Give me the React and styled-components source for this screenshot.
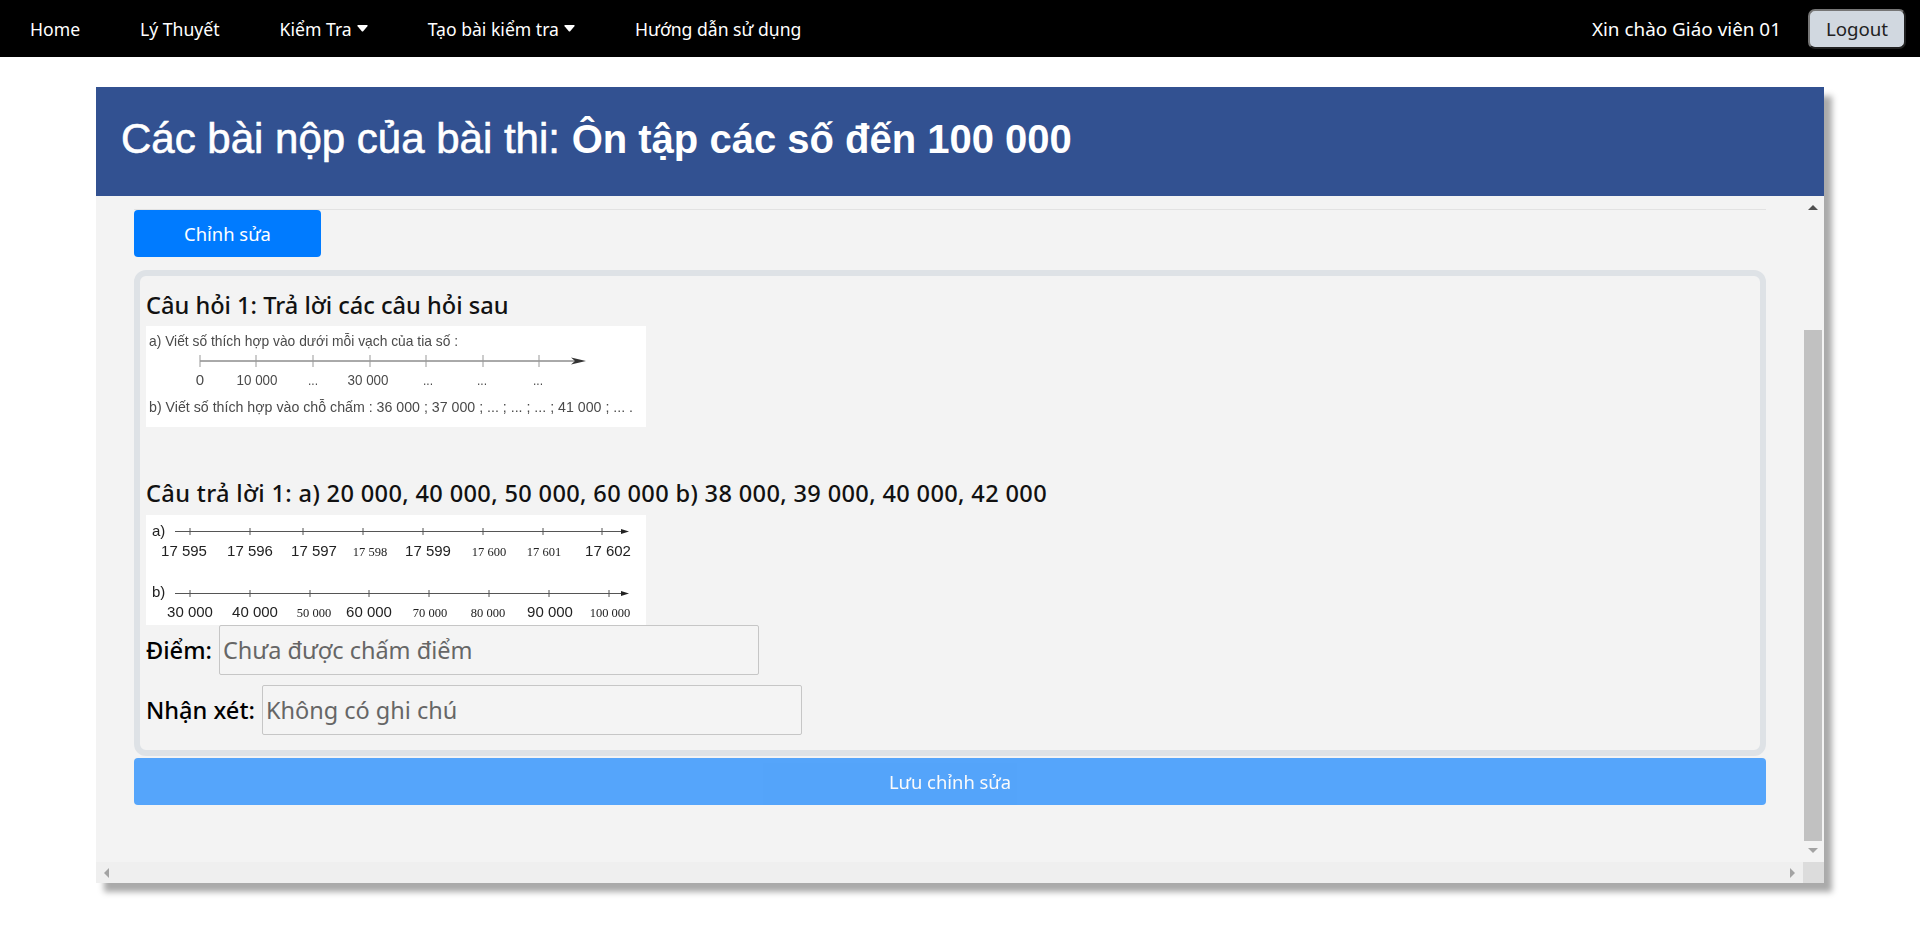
import React from 'react'
import styled, { createGlobalStyle } from 'styled-components'

const GlobalStyle = createGlobalStyle`
  html, body {
    margin: 0;
    height: 100%;
    background: #fff;
    overflow: hidden;
  }
  body {
    font-family: "Noto Sans", "Open Sans", sans-serif;
    color: #111;
  }
`

const Page = styled.div`
  display: flex;
  flex-direction: column;
  height: 930px;
`

const NavBar = styled.nav`
  display: flex;
  align-items: center;
  justify-content: space-between;
  height: 57px;
  background: #000;
  color: #fff;
  padding: 0 14px 0 30px;
`

const NavLinks = styled.div`
  display: flex;
  gap: 60px;
`

const NavLink = styled.a`
  display: flex;
  align-items: center;
  gap: 5px;
  font-size: 17.6px;
  color: #fff;
`

const UserBox = styled.div`
  display: flex;
  align-items: center;
  gap: 27px;
  font-size: 18.9px;
`

const LogoutButton = styled.button`
  width: 98px;
  height: 40px;
  padding: 0;
  background: #d1d8e0;
  border: 2px outset #767676;
  border-radius: 7px;
  font: inherit;
  font-size: 18.7px;
  color: #222;
`

const Main = styled.main`
  padding: 30px 96px 0;
`

const Card = styled.section`
  display: flex;
  flex-direction: column;
  height: 796px;
  background: #f3f3f3;
  box-shadow: 8px 9px 6px #aaa;
`

const CardHeader = styled.header`
  display: flex;
  align-items: center;
  box-sizing: border-box;
  height: 109px;
  padding: 0 25px 6px;
  background: #325191;
  color: #fff;
`

const Title = styled.h1`
  margin: 0;
  font-family: "Liberation Sans", Arial, sans-serif;
  font-size: 42px;
  font-weight: 400;
  -webkit-text-stroke: 0.6px #fff;
`

const TitleName = styled.span`
  font-size: 40px;
  font-weight: 700;
  -webkit-text-stroke: 0;
`

const ScrollArea = styled.div`
  flex: 1;
  min-height: 0;
  display: grid;
  grid-template-columns: 1fr 21px;
  grid-template-rows: 1fr 21px;
`

const Viewport = styled.div`
  overflow: hidden;
  padding: 13px 37px 0 38px;
`

const Divider = styled.hr`
  margin: 0;
  border: 0;
  border-top: 1px solid #e2e2e2;
`

const PrimaryButton = styled.button`
  display: block;
  width: ${p => (p.$wide ? '100%' : '187px')};
  height: 47px;
  padding: 0;
  border: 0;
  border-radius: 4px;
  background: #007bff;
  opacity: ${p => (p.$wide ? 0.65 : 1)};
  color: #fff;
  font: inherit;
  font-size: 18.4px;
`

const QuestionBox = styled.div`
  display: flex;
  flex-direction: column;
  align-items: flex-start;
  margin-top: 13px;
  height: 486px;
  box-sizing: border-box;
  margin-bottom: 2px;
  padding: 10px 6px 0;
  border: 6px solid #dee2e6;
  border-radius: 12px;
`

const Heading = styled.h5`
  margin: 0;
  height: 40px;
  font-size: 23.6px;
  line-height: 38px;
  font-weight: 500;
  white-space: nowrap;
`

const AnswerHeading = styled(Heading)`
  height: 41px;
  margin-top: 47px;
  letter-spacing: 0.34px;
`

const Figure = styled.svg`
  display: block;
  background: #fff;
  font-family: "Liberation Sans", Arial, sans-serif;
  fill: #4a4a4a;
  filter: blur(0.3px);
`

const FieldRow = styled.label`
  display: flex;
  align-items: center;
  gap: 7px;
  margin-bottom: 10px;
  font-size: 23.6px;
  font-weight: 500;
  color: #000;
`

const FieldInput = styled.input`
  box-sizing: border-box;
  width: 540px;
  height: 50px;
  padding: 0 3px;
  background: #f4f4f4;
  border: 1px solid #c6c6c6;
  border-radius: 2px;
  font: inherit;
  font-size: 23.5px;
  font-weight: 400;
  &::placeholder {
    color: #666;
    opacity: 1;
  }
`

const VerticalBar = styled.div`
  position: relative;
  background: #f3f3f3;
`

const VerticalThumb = styled.div`
  margin: 134px 2px 0 1px;
  height: 511px;
  background: #c1c1c1;
`

const Arrow = styled.svg`
  position: absolute;
  display: block;
  fill: ${p => p.$color || '#a3a3a3'};
`

const HorizontalBar = styled.div`
  position: relative;
  background: #efefef;
`

const Corner = styled.div`
  background: #dcdcdc;
`

const Line = ({ y, ticks, x1, x2, tickTop, tickBottom, stroke = '#555', tickStroke = '#555' }) => (
  <g strokeWidth="1">
    <line x1={x1} x2={x2} y1={y} y2={y} stroke={stroke} />
    {ticks.map(t => <line key={t} x1={t} x2={t} y1={tickTop} y2={tickBottom} stroke={tickStroke} />)}
  </g>
)

const Labels = ({ y, items }) => items.map(([t, x, serif]) => (
  <text
    key={t + x}
    x={x}
    y={y}
    textAnchor="middle"
    fontSize={serif ? 12.5 : 15}
    fontFamily={serif ? '"Liberation Serif", serif' : undefined}
    fill="#222"
  >
    {t}
  </text>
))

const QuestionFigure = () => (
  <Figure width="500" height="101" viewBox="0 0 500 101">
    <text x="3" y="20" fontSize="15" textLength="309" lengthAdjust="spacingAndGlyphs">a) Viết số thích hợp vào dưới mỗi vạch của tia số :</text>
    <Line y={35} x1={54} x2={432} tickTop={29} tickBottom={41} stroke="#555" tickStroke="#999" ticks={[54, 110, 167, 224, 280, 337, 393]} />
    <path d="M425 31.5 L440 35 L425 38.5 L429 35 Z" fill="#333" />
    <text x="54" y="59" fontSize="15" textAnchor="middle">0</text>
    <text x="111" y="59" fontSize="15" textLength="41" lengthAdjust="spacingAndGlyphs" textAnchor="middle">10 000</text>
    <text x="167" y="59" fontSize="12" textAnchor="middle">...</text>
    <text x="222" y="59" fontSize="15" textLength="41" lengthAdjust="spacingAndGlyphs" textAnchor="middle">30 000</text>
    <text x="282" y="59" fontSize="12" textAnchor="middle">...</text>
    <text x="336" y="59" fontSize="12" textAnchor="middle">...</text>
    <text x="392" y="59" fontSize="12" textAnchor="middle">...</text>
    <text x="3" y="86" fontSize="15" textLength="484" lengthAdjust="spacingAndGlyphs">b) Viết số thích hợp vào chỗ chấm : 36 000 ;  37 000 ; ... ; ... ; ... ; 41 000 ; ... .</text>
  </Figure>
)

const AnswerFigure = () => (
  <Figure width="500" height="110" viewBox="0 0 500 110">
    <text x="6" y="21" fontSize="15" fill="#222">a)</text>
    <Line y={16.5} x1={29} x2={476} tickTop={13} tickBottom={20} ticks={[44, 104, 157, 217, 277, 337, 397, 456]} />
    <path d="M475 14 L483 16.5 L475 19 Z" fill="#222" />
    <Labels y={41} items={[['17 595', 38], ['17 596', 104], ['17 597', 168], ['17 598', 224, true], ['17 599', 282], ['17 600', 343, true], ['17 601', 398, true], ['17 602', 462]]} />
    <text x="6" y="82" fontSize="15" fill="#222">b)</text>
    <Line y={78.5} x1={29} x2={476} tickTop={75} tickBottom={82} ticks={[44, 104, 164, 223, 283, 343, 403, 463]} />
    <path d="M475 76 L483 78.5 L475 81 Z" fill="#222" />
    <Labels y={102} items={[['30 000', 44], ['40 000', 109], ['50 000', 168, true], ['60 000', 223], ['70 000', 284, true], ['80 000', 342, true], ['90 000', 404], ['100 000', 464, true]]} />
  </Figure>
)

const Caret = () => (
  <svg width="11" height="7" viewBox="0 0 11 7" fill="#fff">
    <path d="M1 0 H10 Q11.2 0 10.4 1.2 L6.2 6.2 Q5.5 7 4.8 6.2 L0.6 1.2 Q-0.2 0 1 0 Z" />
  </svg>
)

export default function App() {
  return (
    <Page>
      <GlobalStyle />
      <NavBar>
        <NavLinks>
          <NavLink>Home</NavLink>
          <NavLink>Lý Thuyết</NavLink>
          <NavLink>Kiểm Tra <Caret /></NavLink>
          <NavLink>Tạo bài kiểm tra <Caret /></NavLink>
          <NavLink>Hướng dẫn sử dụng</NavLink>
        </NavLinks>
        <UserBox>
          <span>Xin chào Giáo viên 01</span>
          <LogoutButton>Logout</LogoutButton>
        </UserBox>
      </NavBar>
      <Main>
        <Card>
          <CardHeader>
            <Title>Các bài nộp của bài thi: <TitleName>Ôn tập các số đến 100 000</TitleName></Title>
          </CardHeader>
          <ScrollArea>
            <Viewport>
              <Divider />
              <PrimaryButton>Chỉnh sửa</PrimaryButton>
              <QuestionBox>
                <Heading>Câu hỏi 1: Trả lời các câu hỏi sau</Heading>
                <QuestionFigure />
                <AnswerHeading>Câu trả lời 1: a) 20 000, 40 000, 50 000, 60 000 b) 38 000, 39 000, 40 000, 42 000</AnswerHeading>
                <AnswerFigure />
                <FieldRow>Điểm: <FieldInput placeholder="Chưa được chấm điểm" /></FieldRow>
                <FieldRow>Nhận xét: <FieldInput placeholder="Không có ghi chú" /></FieldRow>
              </QuestionBox>
              <PrimaryButton $wide>Lưu chỉnh sửa</PrimaryButton>
            </Viewport>
            <VerticalBar>
              <Arrow $color="#505050" width="10" height="5" viewBox="0 0 10 5" style={{ top: 9, left: 5 }}><path d="M5 0 L10 5 H0 Z" /></Arrow>
              <VerticalThumb />
              <Arrow width="10" height="5" viewBox="0 0 10 5" style={{ bottom: 9, left: 5 }}><path d="M0 0 H10 L5 5 Z" /></Arrow>
            </VerticalBar>
            <HorizontalBar>
              <Arrow width="5" height="10" viewBox="0 0 5 10" style={{ top: 6, left: 8 }}><path d="M5 0 V10 L0 5 Z" /></Arrow>
              <Arrow width="5" height="10" viewBox="0 0 5 10" style={{ top: 6, right: 8 }}><path d="M0 0 V10 L5 5 Z" /></Arrow>
            </HorizontalBar>
            <Corner />
          </ScrollArea>
        </Card>
      </Main>
    </Page>
  )
}
